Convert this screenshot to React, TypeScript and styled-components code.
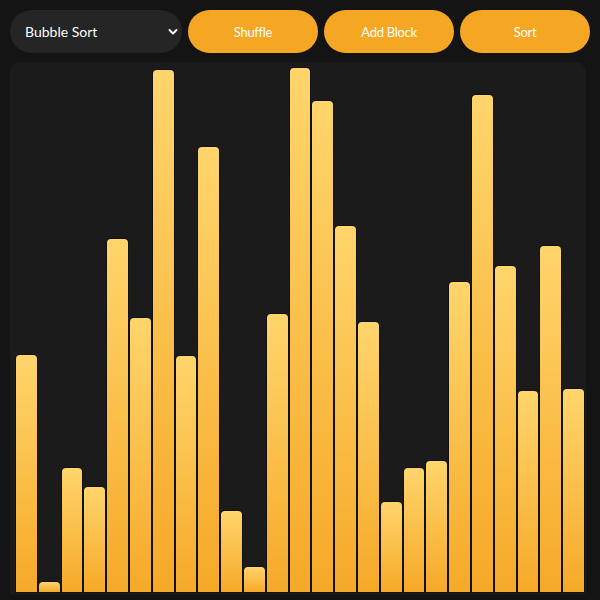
import React, { useState } from "react";
import styled, { createGlobalStyle } from "styled-components";

const Global = createGlobalStyle`
  html, body { margin: 0; padding: 0; background: #141414; overflow: hidden; }
  body { font-family: "Comic Sans MS", "Lato", "DejaVu Sans", sans-serif; color: #fff; }
  * { box-sizing: border-box; }
`;

const Page = styled.div`
  width: 600px;
  padding: 10px 10px 0 10px;
  display: flex;
  flex-direction: column;
  gap: 9px;
`;

const Toolbar = styled.div`
  display: flex;
  gap: 6px;
  height: 43px;
`;

const SelectWrap = styled.div`
  position: relative;
  width: 172px;
  height: 43px;
  flex: none;
`;

const Select = styled.select`
  appearance: none;
  width: 100%;
  height: 100%;
  border: none;
  border-radius: 22px;
  background: #252525;
  color: #fff;
  font-family: inherit;
  font-size: 14px;
  padding: 0 30px 0 15px;
  outline: none;
`;

const Chevron = styled.svg`
  position: absolute;
  right: 4px;
  top: 18px;
  pointer-events: none;
`;

const Button = styled.button`
  flex: 1;
  height: 43px;
  border: none;
  border-radius: 22px;
  background: #f5a623;
  color: #fff;
  font-family: inherit;
  font-size: 13px;
  letter-spacing: -0.3px;
  cursor: pointer;
`;

const Panel = styled.div`
  width: 576px;
  height: 532px;
  background: #1b1b1b;
  border-radius: 10px 10px 0 0;
  padding: 6px 2px 2px 6px;
  display: flex;
  align-items: flex-end;
  gap: 2px;
`;

const Bar = styled.div`
  flex: 1;
  border-radius: 4px 4px 0 0;
  background: linear-gradient(to bottom, #ffd56c 0%, #f6a928 100%);
  box-shadow: 0 0 0 1px rgba(0, 0, 0, 0.35);
`;

const heights = [
  237, 10, 124, 105, 353, 274, 522, 236, 445, 81, 25, 278, 524, 491, 366, 270,
  90, 124, 131, 310, 497, 326, 201, 346, 203,
];

export default function App() {
  const [algo, setAlgo] = useState("bubble");
  return (
    <>
      <Global />
      <Page>
        <Toolbar>
          <SelectWrap>
            <Select value={algo} onChange={(e) => setAlgo(e.target.value)}>
              <option value="bubble">Bubble Sort</option>
              <option value="selection">Selection Sort</option>
              <option value="insertion">Insertion Sort</option>
            </Select>
            <Chevron width="10" height="8" viewBox="0 0 10 8">
              <path d="M1.5 2 L5 5.5 L8.5 2" stroke="#fff" strokeWidth="2" fill="none" strokeLinecap="round" strokeLinejoin="round" />
            </Chevron>
          </SelectWrap>
          <Button>Shuffle</Button>
          <Button>Add Block</Button>
          <Button>Sort</Button>
        </Toolbar>
        <Panel>
          {heights.map((h, i) => (
            <Bar key={i} style={{ height: h }} />
          ))}
        </Panel>
      </Page>
    </>
  );
}
